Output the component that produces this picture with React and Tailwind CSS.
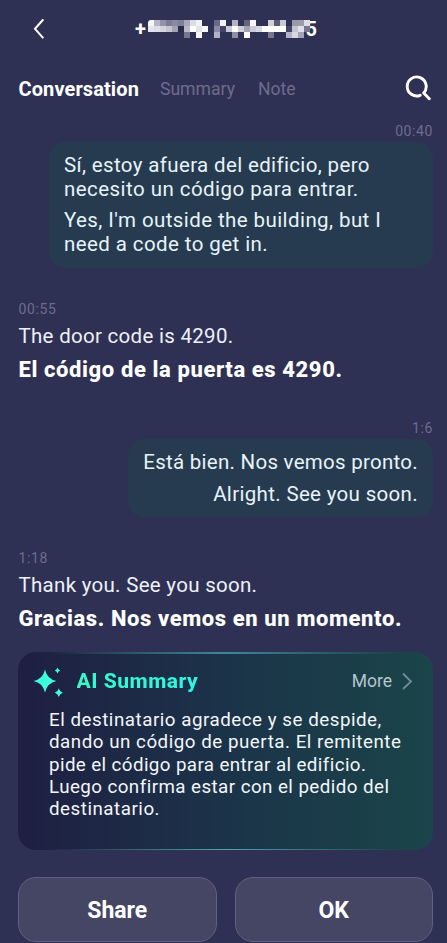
import React from "react";

// one entry per 6px block, rows are drawn top to bottom
const MASK = [
  ["#f7f7fb", "#b5b4c6", "#9392ab", "#7d7c98", "#8a899f", "#807f98", "#a9a8ba", "#dcdce5", "#f2f2f6", "", "", "#6a698a", "#f2f2f6", "", "#b3b2c4", "", "#65647c", "#f5f5fa", "", "", "#d0cfdb", "#5a5976", "#c9c8d6", "", "#9a99aa", "#9d9cab", "#dddde6"],
  ["#e4e4ec", "#dedee8", "#d4d4de", "#c5c4d2", "#a3a2b5", "#2a2b4a", "#b9b8ca", "#ffffff", "#e2e2ea", "#f6f6fa", "", "#8b8aa3", "#44446a", "#c9c8d6", "#ffffff", "#cfced9", "#a3a2b5", "#c9c8d6", "#d8d8e2", "#ffffff", "#ffffff", "#ffffff", "#ffffff", "#44446a", "#c5c4d2", "#e0e0e8", "#77768f"],
  ["", "", "", "", "", "", "#77768f", "", "#f5f5fa", "", "", "#b3b2c4", "", "", "#8e8da4", "", "#ffffff", "", "", "", "#77768f", "", "", "#b3b2c4", "#d8d8e2", "#a3a2b5", ""],
];

function Header() {
  return (
    <header className="flex h-[57px] items-center">
      <svg className="ml-[33px] h-5 w-3" viewBox="0 0 12 20" fill="none" stroke="#fff" strokeWidth="2" strokeLinecap="round">
        <path d="M9.800 1 2 9.800 9.800 18.600" />
      </svg>
      <div className="relative ml-[90px] flex h-5 w-[182px] justify-between text-xl leading-5 font-bold">
        <span>+</span>
        <span>5</span>
        <div className="absolute top-[1px] left-[13px] grid grid-cols-[repeat(27,6px)] overflow-hidden rounded-l-[3px]">
          {MASK.flat().map((color, i) => (
            <span key={i} className="h-1.5" style={{ backgroundColor: color }} />
          ))}
        </div>
      </div>
    </header>
  );
}

function Tabs() {
  return (
    <nav className="flex h-[64px] items-center pr-4 pl-[18.5px]">
      <span className="text-xl font-bold tracking-[0.1px]">Conversation</span>
      <span className="ml-[21px] text-[17.6px] text-[#6c6d8c]">Summary</span>
      <span className="ml-[23px] text-[17.6px] text-[#6c6d8c]">Note</span>
      <svg className="mt-[-4px] ml-auto h-7 w-7" viewBox="0 0 28 28" fill="none" stroke="#fff" strokeWidth="2.900">
        <path d="M17.200 22.300A9.500 9.500 0 1 1 20.700 19.900L26.300 25.700" strokeLinecap="round" strokeLinejoin="round" />
      </svg>
    </nav>
  );
}

function Time({ children, className = "" }) {
  return (
    <p className={`text-sm leading-5 tracking-[0.6px] text-[#6c6d8c] ${className}`}>
      {children}
    </p>
  );
}

// message from the user, right aligned bubble
function Bubble({ children, className = "" }) {
  return (
    <div className={`mt-px ml-auto flex flex-col rounded-2xl bg-[#273b50] px-[15px] pt-[11px] text-[20.5px] leading-6 tracking-[0.36px] whitespace-nowrap text-[#e6f3f8] ${className}`}>
      {children}
    </div>
  );
}

// message from the other side with the translation in bold
function Incoming({ time, text, translated }) {
  return (
    <div className="pl-[0.5px] whitespace-nowrap">
      <Time>{time}</Time>
      <p className="mt-[5px] text-[20.5px] leading-6 tracking-[0.29px] text-[#eef0f8]">{text}</p>
      <p className="mt-[10px] text-[22px] leading-6 font-extrabold tracking-[0.6px]">{translated}</p>
    </div>
  );
}

function SummaryCard() {
  return (
    <section className="relative mt-[21px] h-[198px] rounded-[18px] bg-linear-to-r from-[#1e1f42] via-[#1b3349] to-[#1a4549] pt-[17px]">
      <div className="absolute inset-x-8 top-0 h-[1.5px] bg-linear-to-r from-transparent via-[#3f8796] to-transparent" />
      <div className="absolute inset-x-8 bottom-0 h-[1.5px] bg-linear-to-r from-transparent via-[#4fa5a9] to-transparent" />
      <div className="flex h-6 items-center">
        <svg className="ml-[15px] h-8 w-8" viewBox="0 0 32 32" fill="#3cffdc">
          <path d="M12 4.500Q14 14 23.500 16Q14 18 12 27.500Q10 18 0.500 16Q10 14 12 4.500Z" />
          <path d="M24.500 2.500Q25.200 4.800 27.300 5.500Q25.200 6.200 24.500 8.500Q23.800 6.200 21.700 5.500Q23.800 4.800 24.500 2.500Z" />
          <path d="M25.800 23.500Q26.700 26.800 29.800 27.700Q26.700 28.600 25.800 32Q24.900 28.600 21.800 27.700Q24.900 26.800 25.800 23.500Z" />
        </svg>
        <h2 className="ml-[11.5px] bg-linear-to-r from-[#38f9c5] to-[#2cf5e6] bg-clip-text text-[21px] leading-6 font-extrabold tracking-[0.5px] text-transparent">
          AI Summary
        </h2>
        <span className="ml-auto text-[17.5px] text-[#b4c5cf]">More</span>
        <svg className="mr-5 ml-[9px] h-[18px] w-3" viewBox="0 0 12 18" fill="none" stroke="#6f8f98" strokeWidth="1.800">
          <path d="M2 1.500 10 9.500 2 17" />
        </svg>
      </div>
      <p className="mt-[16px] pl-[31px] text-[18.75px] leading-[22.25px] tracking-[0.52px] whitespace-nowrap text-[#f3f6fa]">
        El destinatario agradece y se despide,
        <br />
        dando un código de puerta. El remitente
        <br />
        <span className="tracking-[0.4px]">pide el código para entrar al edificio.</span>
        <br />
        <span className="tracking-[0.44px]">Luego confirma estar con el pedido del</span>
        <br />
        destinatario.
      </p>
    </section>
  );
}

function Button({ children }) {
  return (
    <button className="h-[65px] flex-1 rounded-[18px] border border-[#5f6083] bg-[#454664] pt-1 text-[23px] font-bold">
      {children}
    </button>
  );
}

export default function App() {
  return (
    <div className="h-[943px] w-[447px] overflow-hidden bg-[#2f3154] font-['Roboto',sans-serif] text-white">
      <Header />
      <Tabs />
      <main className="pr-3.5 pl-[18px]">
        <Time className="text-right">00:40</Time>
        <Bubble className="h-[126px] w-96">
          <p>
            Sí, estoy afuera del edificio, pero
            <br />
            <span className="tracking-[0.45px]">necesito un código para entrar.</span>
          </p>
          <p className="mt-[7px] tracking-[0.41px]">
            Yes, I'm outside the building, but I
            <br />
            need a code to get in.
          </p>
        </Bubble>
        <div className="mt-[31px]">
          <Incoming time="00:55" text="The door code is 4290." translated="El código de la puerta es 4290." />
        </div>
        <Time className="mt-[36px] text-right">1:6</Time>
        <Bubble className="h-[78px] w-[305px] items-end">
          <p className="tracking-[0.27px]">Está bien. Nos vemos pronto.</p>
          <p className="mt-2 tracking-[0.33px]">Alright. See you soon.</p>
        </Bubble>
        <div className="mt-[31px]">
          <Incoming time="1:18" text="Thank you. See you soon." translated="Gracias. Nos vemos en un momento." />
        </div>
        <SummaryCard />
        <div className="mt-[27px] flex gap-[18px]">
          <Button>Share</Button>
          <Button>OK</Button>
        </div>
      </main>
    </div>
  );
}
